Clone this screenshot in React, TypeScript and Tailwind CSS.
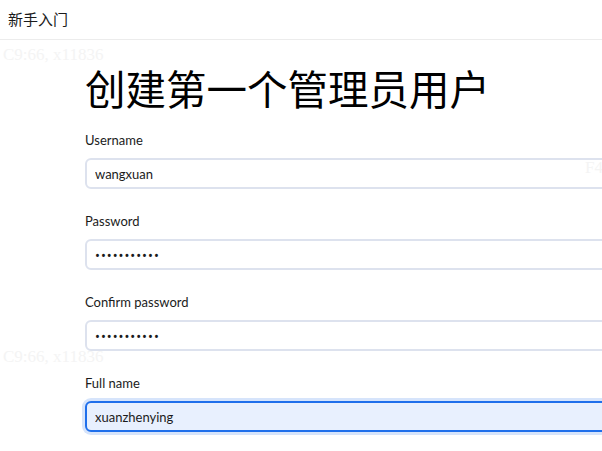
import React from "react";

const fields = [
  { label: "Username", type: "text", value: "wangxuan", active: false },
  { label: "Password", type: "password", value: "12345678901", active: false },
  { label: "Confirm password", type: "password", value: "12345678901", active: false },
  { label: "Full name", type: "text", value: "xuanzhenying", active: true },
];

function Field({ label, type, value, active }: { label: string; type: string; value: string; active: boolean }) {
  const base = "w-[560px] h-[31px] rounded-md border-2 pl-[8px] pr-[8px] text-[13px] text-[#1b1b1b] outline-none";
  return (
    <div className="flex flex-col gap-2">
      <label className="text-[13px] leading-5 text-[#1b1b1b]">{label}</label>
      <input
        readOnly
        type={type}
        value={value}
        className={
          base +
          (active ? " border-[#1f6feb] bg-[#e8f0fe] ring-[3px] ring-[#d6e4fb]" : " border-[#dde2ee] bg-white") +
          (type === "password" ? " tracking-[1px] font-['Noto_Sans',sans-serif]" : "")
        }
      />
    </div>
  );
}

export default function App() {
  return (
    <div className="relative w-[602px] h-[451px] overflow-hidden bg-white font-['Lato','Noto_Sans_CJK_SC',sans-serif]">
      <header className="h-10 flex items-center px-2 border-b border-[#ececec]">
        <span className="text-[15px] text-[#1b1b1b] font-['Noto_Sans_CJK_SC',sans-serif]">新手入门</span>
      </header>
      <main className="pl-[85px] pt-[24px] flex flex-col gap-[18px]">
        <h1 className="text-[40.5px] leading-[48px] text-black font-['Noto_Sans_CJK_SC',sans-serif]">创建第一个管理员用户</h1>
        <div className="flex flex-col gap-[22px]">
          {fields.map((f) => (
            <Field key={f.label} {...f} />
          ))}
        </div>
      </main>
      <span className="absolute left-[3px] top-[42px] text-[17px] text-[#f4f4f4] font-['Liberation_Serif',serif] pointer-events-none">C9:66, x11836</span>
      <span className="absolute left-[3px] top-[344px] text-[17px] text-[#f4f4f4] font-['Liberation_Serif',serif] pointer-events-none">C9:66, x11836</span>
      <span className="absolute left-[585px] top-[155px] text-[17px] text-[#f4f4f4] font-['Liberation_Serif',serif] pointer-events-none">F4</span>
    </div>
  );
}
